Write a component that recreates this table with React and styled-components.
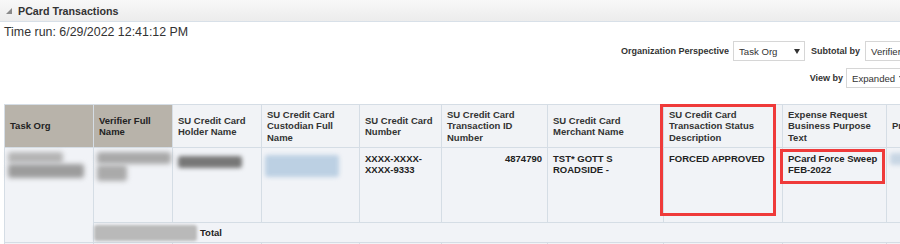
import React from 'react'
import styled, { createGlobalStyle } from 'styled-components'

const GlobalStyle = createGlobalStyle`
  html, body {
    margin: 0;
    padding: 0;
    background: #fff;
    overflow: hidden;
    font-family: 'Liberation Sans', Arial, sans-serif;
    color: #222;
  }
`

const Page = styled.div`
  width: 900px;
  height: 244px;
  overflow: hidden;
`

const TitleBar = styled.div`
  height: 21px;
  display: flex;
  align-items: center;
  gap: 6px;
  padding-left: 6px;
  background: linear-gradient(#f8f8f8, #ececec);
  border-bottom: 1px solid #d8e0e8;
`

const Title = styled.span`
  font-size: 10.7px;
  font-weight: bold;
  color: #333;
`

const TimeRun = styled.div`
  padding: 3px 4px 0;
  font-size: 12.4px;
  line-height: 15px;
  color: #333;
`

const Controls = styled.div`
  display: grid;
  grid-template-columns: 282px;
  justify-items: end;
  row-gap: 7px;
  width: 282px;
  margin: 1px -3px 0 auto;
`

const ControlRow = styled.div`
  display: flex;
  align-items: center;
  height: 20px;
  width: max-content;
  justify-self: ${(p) => (p.$start ? 'start' : 'end')};
`

const Label = styled.span`
  font-size: 9px;
  font-weight: bold;
  color: #333;
  margin-right: ${(p) => p.$gap}px;
  margin-left: ${(p) => p.$lead || 0}px;
`

const Dropdown = styled.div`
  box-sizing: border-box;
  width: ${(p) => p.$w}px;
  height: 20px;
  display: flex;
  align-items: center;
  justify-content: space-between;
  padding: 0 4px 0 5px;
  background: #fff;
  border: 1px solid #d6d6d6;
  font-size: 9.6px;
  color: #333;
  white-space: nowrap;
`

const Caret = styled.span`
  width: 0;
  height: 0;
  margin-left: 4px;
  border-left: 3px solid transparent;
  border-right: 3px solid transparent;
  border-top: 5px solid #333;
`

const TableWrap = styled.div`
  position: relative;
  margin: 16px 0 0 4px;
  width: 992px;
`

const Table = styled.table`
  border-collapse: collapse;
  table-layout: fixed;
  width: 992px;
  font-size: 9.5px;
  line-height: 11.4px;
`

const Th = styled.th`
  height: 42px;
  padding: 0 5px;
  text-align: left;
  vertical-align: middle;
  font-weight: bold;
  color: ${(p) => (p.$tan ? '#222' : '#333')};
  background: ${(p) => (p.$tan ? '#b8b3aa' : '#f1f3f6')};
  border: 1px solid #d5dde5;
`

const Td = styled.td`
  height: ${(p) => p.$h || 69}px;
  padding: 5px 5px 0;
  vertical-align: top;
  font-weight: bold;
  text-align: ${(p) => (p.$right ? 'right' : 'left')};
  background: #f1f3f7;
  border: 1px solid #d5dde5;
`

const TotalCell = styled.td`
  height: 19px;
  padding: 0;
  background: #f1f3f7;
  border: 1px solid #d5dde5;
`

const TotalInner = styled.div`
  display: flex;
  align-items: center;
  gap: 3px;
  font-weight: bold;
  color: #222;
`

const Smudge = styled.div`
  width: ${(p) => p.$w}px;
  height: ${(p) => p.$h}px;
  margin-top: ${(p) => p.$top || 0}px;
  background: ${(p) => p.$c};
  filter: blur(${(p) => p.$b || 2.5}px);
  border-radius: 3px;
`

const Mark = styled.div`
  position: absolute;
  box-sizing: border-box;
  border: 3px solid #ef3a3a;
  pointer-events: none;
`

const widths = [89, 79, 89, 98, 82, 106, 116, 119, 104, 110]

const headers = [
  'Task Org',
  'Verifier Full Name',
  'SU Credit Card Holder Name',
  'SU Credit Card Custodian Full Name',
  'SU Credit Card Number',
  'SU Credit Card Transaction ID Number',
  'SU Credit Card Merchant Name',
  'SU Credit Card Transaction Status Description',
  'Expense Request Business Purpose Text',
  'Program Number',
]

function TriangleIcon() {
  return (
    <svg width="6" height="6" viewBox="0 0 6 6">
      <polygon points="6,0 6,6 0,6" fill="#8a8a8a" />
    </svg>
  )
}

function App() {
  return (
    <Page>
      <GlobalStyle />
      <TitleBar>
        <TriangleIcon />
        <Title>PCard Transactions</Title>
      </TitleBar>
      <TimeRun>Time run: 6/29/2022 12:41:12 PM</TimeRun>

      <Controls>
        <ControlRow $start>
          <Label $gap={4}>Organization Perspective</Label>
          <Dropdown $w={72}>
            Task Org
            <Caret />
          </Dropdown>
          <Label $lead={6} $gap={5}>
            Subtotal by
          </Label>
          <Dropdown $w={110}>
            Verifier Full Name
            <Caret />
          </Dropdown>
        </ControlRow>
        <ControlRow>
          <Label $gap={3}>View by</Label>
          <Dropdown $w={57}>
            Expanded
            <Caret />
          </Dropdown>
        </ControlRow>
      </Controls>

      <TableWrap>
        <Table>
          <colgroup>
            {widths.map((w, i) => (
              <col key={i} style={{ width: w }} />
            ))}
          </colgroup>
          <thead>
            <tr>
              {headers.map((h, i) => (
                <Th key={h} $tan={i < 2}>
                  {h}
                </Th>
              ))}
            </tr>
          </thead>
          <tbody>
            <tr>
              <Td rowSpan={2} style={{ paddingLeft: 3 }}>
                <Smudge $w={55} $h={11} $c="#b4b4b4" $top={-1} />
                <Smudge $w={76} $h={14} $c="#9c9c9c" $top={1} />
              </Td>
              <Td style={{ paddingLeft: 3 }}>
                <Smudge $w={74} $h={12} $c="#a8a8a8" $top={-1} />
                <Smudge $w={30} $h={16} $c="#aaaaaa" $top={1} />
              </Td>
              <Td>
                <Smudge $w={64} $h={12} $c="#777" $top={3} $b={2} />
              </Td>
              <Td style={{ paddingLeft: 3 }}>
                <Smudge $w={74} $h={22} $c="#bcd0e3" $top={2} $b={2} />
              </Td>
              <Td>XXXX-XXXX-XXXX-9333</Td>
              <Td $right>4874790</Td>
              <Td>TST* GOTT S ROADSIDE -</Td>
              <Td>FORCED APPROVED</Td>
              <Td>PCard Force Sweep FEB-2022</Td>
              <Td style={{ paddingLeft: 3 }}>
                <Smudge $w={40} $h={12} $c="#c8d6e4" $b={2} />
              </Td>
            </tr>
            <tr>
              <TotalCell colSpan={9}>
                <TotalInner>
                  <Smudge $w={103} $h={16} $c="#b9b9b9" $b={1.5} />
                  Total
                </TotalInner>
              </TotalCell>
            </tr>
            <tr>
              {widths.map((w, i) => (
                <Td key={i} $h={15} />
              ))}
            </tr>
          </tbody>
        </Table>
        <Mark style={{ left: 656, top: 0, width: 116, height: 112 }} />
        <Mark style={{ left: 776, top: 45, width: 105, height: 35 }} />
      </TableWrap>
    </Page>
  )
}

export default App
